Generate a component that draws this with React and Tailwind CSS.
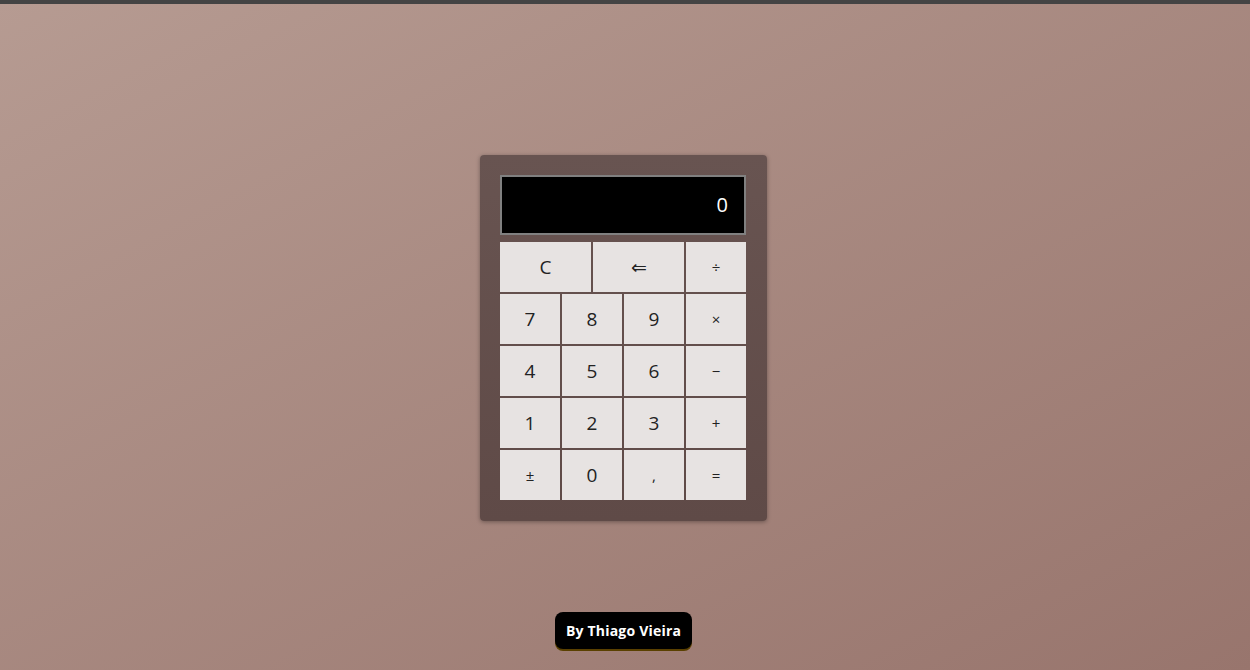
import React from 'react';

const rows = [
    ['7', '8', '9', '×'],
    ['4', '5', '6', '−'],
    ['1', '2', '3', '+'],
    ['±', '0', ',', '='],
];

function Key({ label, className = '' }) {
    const small = ['×', '−', '+', '=', '÷', '±', ','].includes(label);
    return (
        <button
            className={`h-[50px] bg-[#e7e3e2] text-[#222] flex items-center justify-center ${small ? 'text-[15px]' : 'text-[19px]'} ${className}`}
        >
            {label}
        </button>
    );
}

export default function App() {
    return (
        <div
            className="w-[1250px] h-[670px] flex flex-col bg-gradient-to-br from-[#b69b92] to-[#98756d] overflow-hidden"
            style={{ fontFamily: '"Open Sans", "Liberation Sans", sans-serif' }}
        >
            <div className="h-[4px] bg-[#444] shrink-0" />
            <div className="flex-1 flex flex-col items-center pr-[3px]">
                <div className="mt-[151px] w-[287px] rounded-[4px] bg-gradient-to-b from-[#685451] to-[#5f4a47] p-[20px] pr-[21px] pb-[21px] shadow-[0_1px_4px_rgba(0,0,0,0.35)]">
                    <div className="h-[60px] border-2 border-[#808080] bg-black flex items-center justify-end pr-[16px] text-white text-[20px]">
                        0
                    </div>
                    <div className="mt-[7px] flex flex-col gap-[2px]">
                        <div className="flex gap-[2px]">
                            <Key label="C" className="flex-1" />
                            <Key label="⇐" className="flex-1" />
                            <Key label="÷" className="w-[60px]" />
                        </div>
                        {rows.map((r, i) => (
                            <div key={i} className="grid grid-cols-4 gap-[2px]">
                                {r.map((k) => (
                                    <Key key={k} label={k} />
                                ))}
                            </div>
                        ))}
                    </div>
                </div>
                <button className="mt-[91px] h-[37px] px-[11px] rounded-[8px] bg-black text-white text-[14px] font-bold tracking-[0.2px] shadow-[0_2px_0_#5a4000]">
                    By Thiago Vieira
                </button>
            </div>
        </div>
    );
}
